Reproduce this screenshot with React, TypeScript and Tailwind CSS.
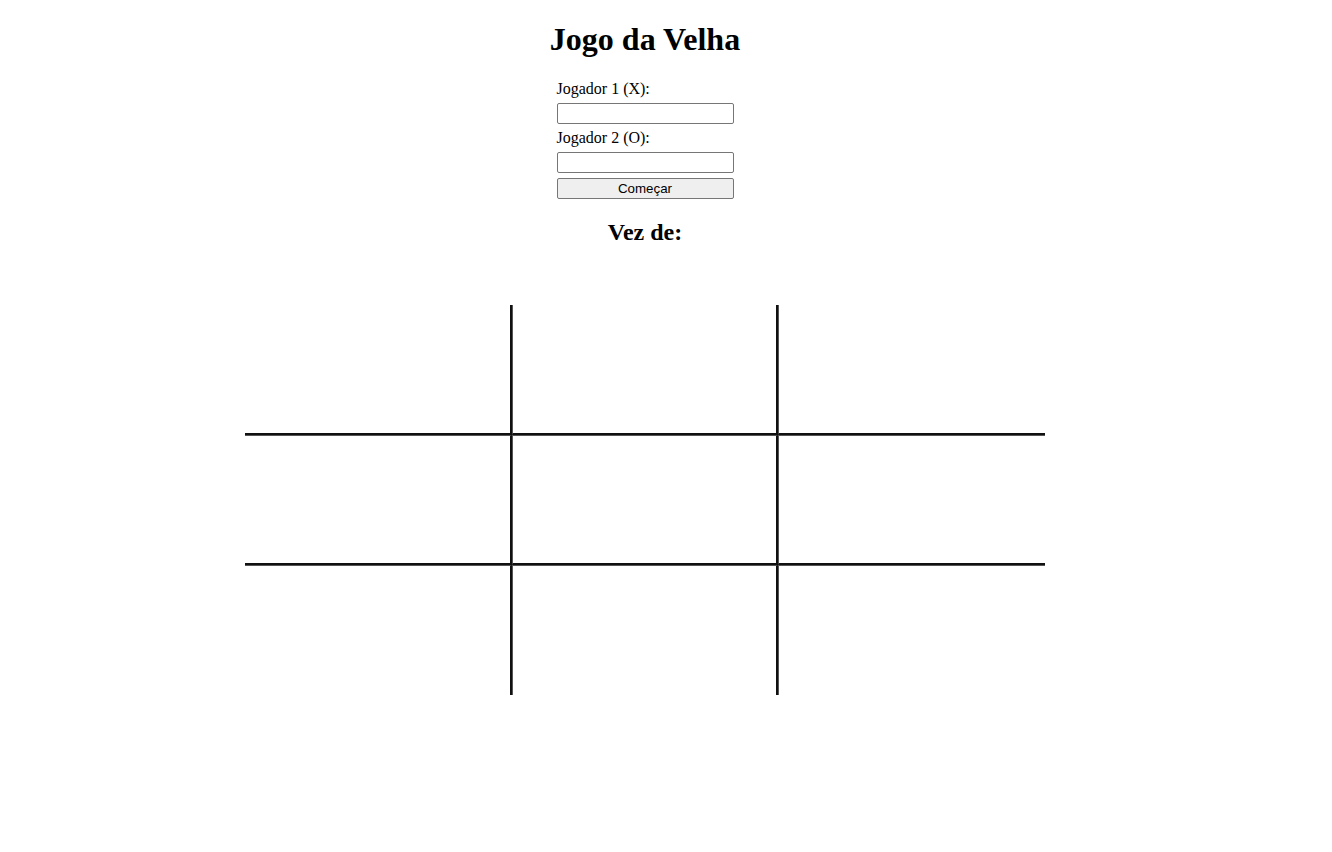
import { useState } from "react";

const App = () => {
  const [board, setBoard] = useState<string[]>(Array(9).fill(""));
  const [p1, setP1] = useState("");
  const [p2, setP2] = useState("");
  const [turn, setTurn] = useState<string>("");

  const handleStart = () => {
    setBoard(Array(9).fill(""));
    setTurn(p1);
  };

  const handleClick = (i: number) => {
    if (!turn || board[i]) return;
    const mark = turn === p1 ? "X" : "O";
    const next = [...board];
    next[i] = mark;
    setBoard(next);
    setTurn(turn === p1 ? p2 : p1);
  };

  return (
    <div className="w-[1290px] flex flex-col items-center bg-white text-black font-['Liberation_Serif',serif]">
      {/* Title */}
      <h1 className="mt-[21.44px] mb-[21.44px] text-[32px] leading-[normal] font-bold">Jogo da Velha</h1>

      {/* Player form */}
      <div className="w-[177px] flex flex-col text-[16px] leading-[normal]">
        <label>Jogador 1 (X):</label>
        <input
          value={p1}
          onChange={(e) => setP1(e.target.value)}
          className="my-[5px] h-[21px] px-[2px] border border-[#767676] rounded-[2px] text-[13.33px] font-['Liberation_Sans',sans-serif]"
        />
        <label>Jogador 2 (O):</label>
        <input
          value={p2}
          onChange={(e) => setP2(e.target.value)}
          className="my-[5px] h-[21px] px-[2px] border border-[#767676] rounded-[2px] text-[13.33px] font-['Liberation_Sans',sans-serif]"
        />
        <button
          onClick={handleStart}
          className="h-[21px] bg-[#efefef] border border-[#767676] rounded-[2px] text-[13.33px] font-['Liberation_Sans',sans-serif] leading-none"
        >
          Começar
        </button>
      </div>

      {/* Current turn */}
      <h2 className="mt-[19.92px] mb-[19.92px] text-[24px] leading-[normal] font-bold">Vez de: {turn}</h2>

      {/* Board */}
      <div className="mt-[39px] w-[800px] grid grid-cols-[267px_266px_267px] grid-rows-[130px_130px_130px]">
        {board.map((cell, i) => {
          const col = i % 3;
          const row = Math.floor(i / 3);
          return (
            <div
              key={i}
              onClick={() => handleClick(i)}
              className={
                "flex items-center justify-center text-[64px] font-bold cursor-pointer " +
                (col < 2 ? "border-r-2 border-r-[#111] " : "") +
                (col > 0 ? "border-l border-l-[#555] " : "") +
                (row < 2 ? "border-b-2 border-b-[#111] " : "") +
                (row > 0 ? "border-t border-t-[#555] " : "")
              }
            >
              {cell}
            </div>
          );
        })}
      </div>
    </div>
  );
};

export default App;
